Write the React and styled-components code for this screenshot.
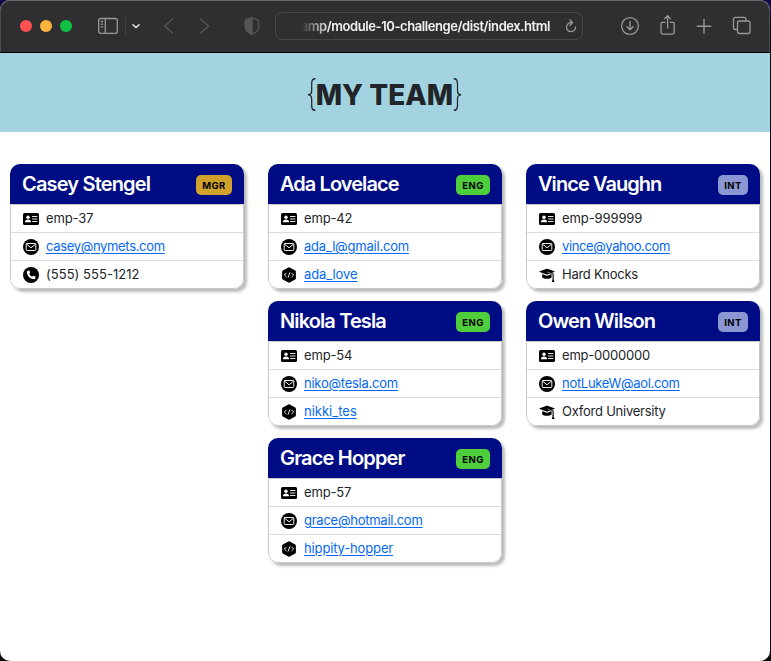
import React from 'react';
import styled, { createGlobalStyle } from 'styled-components';

const Global = createGlobalStyle`
  *, *::before, *::after { box-sizing: border-box; }
  html, body { margin: 0; background: #0a0a0c; }
  body { font-family: Inter, 'Liberation Sans', sans-serif; overflow: hidden; }
`;

const Desktop = styled.div`
  width: 771px;
  height: 661px;
  background: linear-gradient(180deg, #100a45 0, #100a45 14px, #0a0a0c 20px, #0a0a0c 100%);
`;
const Window = styled.div`
  width: 770px;
  height: 661px;
  border-radius: 10px;
  overflow: hidden;
  background: #fff;
  display: flex;
  flex-direction: column;
`;
const Toolbar = styled.div`
  height: 53px;
  flex: none;
  background: #2f2f31;
  border-bottom: 1px solid #000;
  box-shadow: inset 0 1px 0 #6a6a6c, inset 1px 0 0 #4c4c4e, inset -1px 0 0 #4c4c4e;
  border-radius: 10px 10px 0 0;
  display: flex;
  align-items: center;
  padding-left: 20px;
`;
const Lights = styled.div`
  display: flex;
  gap: 8px;
  margin-right: 26px;
`;
const Light = styled.span`
  width: 12px;
  height: 12px;
  border-radius: 50%;
  background: ${(p) => p.$color};
`;
const ToolIcon = styled.svg`
  display: block;
  flex: none;
  width: ${(p) => p.$w}px;
  height: 24px;
  margin-right: ${(p) => p.$gap || 0}px;
  fill: none;
  stroke: ${(p) => p.$color || '#99999b'};
  stroke-width: ${(p) => p.$stroke || 1.4};
  stroke-linecap: round;
  stroke-linejoin: round;
`;
const Divider = styled.span`
  width: 1px;
  height: 18px;
  background: #424244;
  margin-right: 5px;
`;
const Address = styled.div`
  width: 308px;
  height: 28px;
  margin-right: 37px;
  border: 1px solid #48484a;
  border-radius: 7px;
  display: flex;
  align-items: center;
  justify-content: flex-end;
  padding-right: 4px;
`;
const Url = styled.span`
  white-space: nowrap;
  color: #f2f2f2;
  font-size: 13px;
  font-weight: 600;
  line-height: 20px;
  letter-spacing: -0.42px;
  margin-right: 14px;
  mask-image: linear-gradient(90deg, transparent 0, #000 28px);
`;
const Banner = styled.header`
  height: 79px;
  flex: none;
  background: #a3d3e0;
  display: flex;
  justify-content: center;
  color: #212529;
`;
const Title = styled.h1`
  margin: 4px 1px 0 0;
  display: flex;
  align-items: center;
  font-size: 28px;
  font-weight: 800;
  line-height: 34px;
`;
const Brace = styled.span`
  font-size: 36px;
  font-weight: 200;
  width: 9px;
  margin-bottom: 3px;
  display: flex;
  justify-content: center;
  transform: scaleX(0.8);
`;
const Team = styled.main`
  display: grid;
  grid-template-columns: repeat(3, 234px);
  column-gap: 24px;
  padding: 32px 10px 0;
`;
const Column = styled.section`
  display: flex;
  flex-direction: column;
  gap: 12px;
`;
const Card = styled.article`
  height: 125px;
  border-radius: 10px;
  overflow: hidden;
  background: #fff;
  box-shadow: 3px 3px 3px rgba(0, 0, 0, 0.27);
`;
const CardHeader = styled.div`
  height: 40px;
  background: #000c84;
  display: flex;
  align-items: center;
  justify-content: space-between;
  padding: 0 12px;
`;
const Name = styled.h2`
  margin: 0;
  color: #fff;
  font-size: 20px;
  font-weight: 600;
  line-height: 24px;
  letter-spacing: ${(p) => p.$track}px;
  white-space: nowrap;
`;
const badgeColors = { MGR: '#d1a12b', ENG: '#4fce3c', INT: '#8b97d2' };
const badgeWidths = { MGR: 36, ENG: 34, INT: 30 };
const Badge = styled.span`
  width: ${(p) => badgeWidths[p.$role]}px;
  height: 20px;
  margin-top: 2px;
  border-radius: 5px;
  background: ${(p) => badgeColors[p.$role]};
  color: #000;
  font-size: 9.5px;
  font-weight: 700;
  line-height: 21px;
  letter-spacing: 0.5px;
  text-align: center;
`;
const Details = styled.ul`
  margin: 0;
  padding: 0;
  list-style: none;
  height: 85px;
  border: 1px solid #c8c8ca;
  border-radius: 0 0 10px 10px;
`;
const Row = styled.li`
  height: 28px;
  padding-left: 12px;
  display: flex;
  align-items: center;
  gap: 7px;
  color: #212529;
  font-size: 13px;
  line-height: 20px;
  border-top: 1px solid #dcdcdd;
  &:first-child { border-top: 0; height: 27px; }
`;
const Value = styled.span`
  letter-spacing: ${(p) => p.$track}px;
  white-space: nowrap;
  margin-bottom: 2px;
`;
const Link = styled(Value).attrs({ as: 'a', href: '#' })`
  color: #0468f4;
  text-decoration: underline;
  text-decoration-skip-ink: auto;
  text-underline-offset: 1.5px;
  text-decoration-thickness: 1px;
`;
const Glyph = styled.svg`
  display: block;
  width: 16px;
  height: 16px;
  flex: none;
  fill: none;
  stroke-linecap: round;
  stroke-linejoin: round;
`;

const icons = {
  id: (
    <>
      <rect x="0" y="2" width="16" height="12" rx="1.6" fill="#000" />
      <circle cx="5" cy="6.3" r="1.7" fill="#fff" />
      <path d="M1.9 11.3c0-2.1 1.2-2.9 3.1-2.9s3.1.8 3.1 2.9z" fill="#fff" />
      <path d="M9.5 5.5H14M9.5 8H14M9.5 10.5H14" stroke="#fff" strokeWidth="0.9" />
    </>
  ),
  mail: (
    <>
      <circle cx="8" cy="8" r="8" fill="#000" />
      <rect x="3.2" y="4.5" width="9.600" height="7" rx="0.9" stroke="#fff" strokeWidth="0.95" />
      <path d="M3.600 5.200 8 8.800l4.400-3.600" stroke="#fff" strokeWidth="0.95" />
    </>
  ),
  phone: (
    <>
      <circle cx="8" cy="8" r="8" fill="#000" />
      <path d="M4.2 4.2 5.7 3.4q.5-.2.7.3l.8 1.800q.1.400-.2.600l-.8.700c.7 1.400 1.500 2.200 2.900 2.900l.7-.8q.3-.3.6-.2l1.900.8q.4.200.3.700l-.5 1.600q-.2.400-.6.400C7.300 12.200 3.800 8.700 3.800 4.700q0-.4.4-.5z" fill="#fff" />
    </>
  ),
  code: (
    <>
      <path d="M7.300.5q.7-.4 1.400 0l5.500 3.100q.7.400.7 1.200v6.400q0 .8-.7 1.200l-5.500 3.100q-.7.400-1.400 0l-5.500-3.100q-.7-.4-.7-1.200V4.800q0-.8.7-1.200z" fill="#000" />
      <path d="M5.200 6.200 3.400 8l1.800 1.800M10.800 6.200 12.600 8l-1.800 1.800M8.800 5.800 7.200 10.200" stroke="#fff" strokeWidth="0.9" />
    </>
  ),
  school: (
    <>
      <path d="M.7 4.300 7.600 1.700q.4-.1.8 0l6.900 2.600q.6.300 0 .6L8.400 7.600q-.4.100-.8 0L.7 4.900q-.6-.3 0-.6z" fill="#000" />
      <path d="M3.200 7 7.600 8.700q.4.100.8 0L12.600 7v3.500c-1.300 1.500-7.500 1.900-9.400 0z" fill="#000" />
      <path d="M8.400 5 14.100 7.100v4.300" stroke="#000" strokeWidth="1.100" />
      <path d="M8.500 5.100 12.900 6.900" stroke="#fff" strokeWidth="0.500" />
      <path d="M14.100 10.700 15.600 15.100h-2.900z" fill="#000" />
    </>
  ),
};

const columns = [
  [
    { name: 'Casey Stengel', track: -0.83, role: 'MGR', rows: [['id', 'emp-37', false, -0.15], ['mail', 'casey@nymets.com', true, -0.33], ['phone', '(555) 555-1212', false, 0.04]] },
  ],
  [
    { name: 'Ada Lovelace', track: -0.93, role: 'ENG', rows: [['id', 'emp-42', false, -0.15], ['mail', 'ada_l@gmail.com', true, -0.2], ['code', 'ada_love', true, -0.1]] },
    { name: 'Nikola Tesla', track: -0.88, role: 'ENG', rows: [['id', 'emp-54', false, -0.15], ['mail', 'niko@tesla.com', true, -0.25], ['code', 'nikki_tes', true, 0]] },
    { name: 'Grace Hopper', track: -0.82, role: 'ENG', rows: [['id', 'emp-57', false, -0.15], ['mail', 'grace@hotmail.com', true, -0.25], ['code', 'hippity-hopper', true, -0.14]] },
  ],
  [
    { name: 'Vince Vaughn', track: -0.94, role: 'INT', rows: [['id', 'emp-999999', false, -0.1], ['mail', 'vince@yahoo.com', true, -0.4], ['school', 'Hard Knocks', false, -0.27]] },
    { name: 'Owen Wilson', track: -0.92, role: 'INT', rows: [['id', 'emp-0000000', false, -0.2], ['mail', 'notLukeW@aol.com', true, -0.3], ['school', 'Oxford University', false, -0.24]] },
  ],
];

function Member({ person }) {
  return (
    <Card>
      <CardHeader>
        <Name $track={person.track}>{person.name}</Name>
        <Badge $role={person.role}>{person.role}</Badge>
      </CardHeader>
      <Details>
        {person.rows.map(([icon, text, link, track]) => (
          <Row key={text}>
            <Glyph viewBox="0 0 16 16">{icons[icon]}</Glyph>
            {link ? <Link $track={track}>{text}</Link> : <Value $track={track}>{text}</Value>}
          </Row>
        ))}
      </Details>
    </Card>
  );
}

function BrowserBar() {
  return (
    <Toolbar>
      <Lights>
        <Light $color="#ff5152" />
        <Light $color="#ffb53d" />
        <Light $color="#0ec143" />
      </Lights>
      <ToolIcon $w={20} $gap={7} $stroke={1.3} viewBox="0 0 20 24">
        <rect x="0.7" y="4.500" width="18.600" height="14.800" rx="2" />
        <path d="M7.300 4.500v14.800M3.300 7.500h1.300M3.300 10.200h1.300M3.300 12.900h1.300" />
      </ToolIcon>
      <Divider />
      <ToolIcon $w={10} $gap={21} $color="#dededf" $stroke={1.600} viewBox="0 0 10 24">
        <path d="M2 10.800 5 13.500 8 10.800" />
      </ToolIcon>
      <ToolIcon $w={12} $gap={24} $color="#555557" viewBox="0 0 12 24">
        <path d="M10.500 5 2.700 12 10.500 19" />
      </ToolIcon>
      <ToolIcon $w={12} $gap={34} $color="#555557" viewBox="0 0 12 24">
        <path d="M2.500 5 10.500 12 2.500 19" />
      </ToolIcon>
      <ToolIcon $w={16} $gap={15} $color="#555557" viewBox="0 0 16 24">
        <path d="M8 3.700 14 6q.600.200.600 1v6.500c0 3-3.500 5.500-6.600 6.800-3.100-1.300-6.600-3.800-6.600-6.800V7q0-.8.600-1z" />
        <path d="M8 3.700v16.600c-3.100-1.300-6.600-3.800-6.600-6.800V7q0-.8.600-1z" fill="#555557" />
      </ToolIcon>
      <Address>
        <Url>amp/module-10-challenge/dist/index.html</Url>
        <ToolIcon $w={14} $stroke={1.300} viewBox="0 0 14 24">
          <path d="M7.200 8.700A4.500 4.500 0 1 0 11.500 13.200M6 6 8.500 8.600 6 11.200" />
        </ToolIcon>
      </Address>
      <ToolIcon $w={20} $gap={18} $stroke={1.300} viewBox="0 0 20 24">
        <circle cx="10" cy="12" r="8.400" />
        <path d="M10 7.500v8M6.900 12.700 10 15.700l3.100-3" />
      </ToolIcon>
      <ToolIcon $w={20} $gap={18} $stroke={1.300} viewBox="0 0 20 24">
        <path d="M7 8.300H4.500Q3 8.300 3 9.800v8.800q0 1.500 1.500 1.500h10.200q1.500 0 1.500-1.500V9.800q0-1.500-1.500-1.500H12.300M9.600 14V2M6.500 4.900 9.600 1.800l3.100 3.100" />
      </ToolIcon>
      <ToolIcon $w={16} $gap={20} viewBox="0 0 16 24">
        <path d="M8 5.500v13.500M1.300 12.200h13.500" />
      </ToolIcon>
      <ToolIcon $w={20} $stroke={1.300} viewBox="0 0 20 24">
        <rect x="5.500" y="7" width="12.500" height="12.500" rx="2" />
        <path d="M5.300 15.500H3.500q-2 0-2-2V5.300q0-2 2-2h8.300q2 0 2 2v1.500" />
      </ToolIcon>
    </Toolbar>
  );
}

export default function App() {
  return (
    <>
      <Global />
      <Desktop>
        <Window>
          <BrowserBar />
          <Banner>
            <Title>
              <Brace>{'{'}</Brace>MY TEAM<Brace>{'}'}</Brace>
            </Title>
          </Banner>
          <Team>
            {columns.map((people) => (
              <Column key={people[0].name}>
                {people.map((person) => (
                  <Member key={person.name} person={person} />
                ))}
              </Column>
            ))}
          </Team>
        </Window>
      </Desktop>
    </>
  );
}
